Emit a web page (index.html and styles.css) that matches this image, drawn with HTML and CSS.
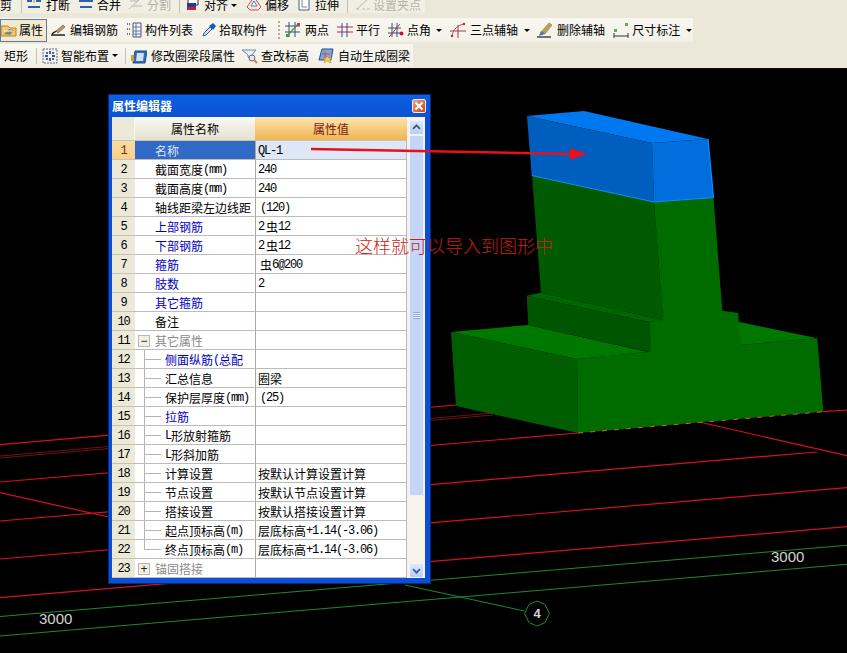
FILE: index.html
```html
<!DOCTYPE html>
<html lang="zh">
<head>
<meta charset="utf-8">
<title>属性编辑器</title>
<link rel="stylesheet" href="styles.css">
</head>
<body>
<div class="app">
<header class="toolbars">
  <div class="bar bar-one">
    <span class="tool mr9">剪</span><i class="sep sep-n"></i>
    <span class="tool"><svg class="ico" viewBox="0 0 16 16"><path d="M1 3h5v2H1zM10 3h5v2h-5zM2 9h12v2H2z" fill="#2f5fa8"/><path d="M8 0v6" stroke="#888"/></svg>打断</span>
    <span class="tool narrow mr7"><svg class="ico" viewBox="0 0 16 16"><path d="M1 3h14v2H1zM2 9h12v2H2z" fill="#2f5fa8"/><path d="M5 0h6v2H5z" fill="#888"/></svg>合并</span>
    <span class="tool narrow off"><svg class="ico" viewBox="0 0 16 16"><path d="M1 12L12 2M2 4h8M5 9h9" stroke="#b8b8b0" fill="none"/></svg>分割</span><i class="sep"></i>
    <span class="tool narrow mr9"><svg class="ico" viewBox="0 0 16 16"><path d="M3 0h10v8H3z" fill="#fff" stroke="#333"/><path d="M2 6h9v6H2z" fill="#1d3f9c"/><path d="M2 10h9v3H2z" fill="#c8203a"/></svg>对齐<b class="arrow snug"></b></span>
    <span class="tool narrow mr7"><svg class="ico" viewBox="0 0 16 16"><path d="M8 0l7 10-3 3H4l-3-3z" fill="#f4e4e4" stroke="#c8505a"/><path d="M8 4l3 5H5z" fill="#fff" stroke="#5a7ab0"/></svg>偏移</span>
    <span class="tool narrow"><svg class="ico" viewBox="0 0 16 16"><path d="M3 0h10v13H3z" fill="#fff" stroke="#47607f"/><path d="M6 3v7h5" stroke="#888" fill="none"/></svg>拉伸</span><i class="sep sep-w"></i>
    <span class="tool tight off end"><svg class="ico" viewBox="0 0 16 16"><path d="M2 12L13 2M1 12h3M7 12h3M12 12h3" stroke="#b8b8b0" fill="none"/></svg>设置夹点</span>
  </div>
  <div class="bar bar-two">
    <span class="tool sel"><svg class="ico" viewBox="0 0 16 16"><path d="M0 4h7l2 2h6v8H0z" fill="#f5c66a" stroke="#b5853a"/><path d="M3 12l5-5 5 1-4 5z" fill="#8a8a6a"/><path d="M3 9h9" stroke="#fff"/></svg>属性</span>
    <span class="tool"><svg class="ico" viewBox="0 0 16 16"><path d="M1 13h14M2 12c2-2 3-2 5-3" stroke="#222" fill="none" stroke-width="1.3"/><path d="M6 9l7-6 2 2-7 6z" fill="#b89a60" stroke="#555" stroke-width=".6"/></svg>编辑钢筋</span>
    <span class="tool narrow"><svg class="ico" viewBox="0 0 16 16"><path d="M1 2h3M1 7h3M1 12h3" stroke="#777" stroke-dasharray="1 1" stroke-width="2"/><path d="M7 1h8v14H7z" fill="#f4f4ff" stroke="#556"/><path d="M7 5h8M7 9h8M7 12h8M10 1v14" stroke="#5b7cb0"/></svg>构件列表</span>
    <span class="tool tight mr11"><svg class="ico" viewBox="0 0 16 16"><path d="M2 14l1-3 6-6 2 2-6 6z" fill="#cfe0f4" stroke="#2a5f9c"/><path d="M8 4l4-3 3 3-3 4z" fill="#1e5aa8"/></svg>拾取构件</span>
    <i class="grip"></i>
    <span class="tool"><svg class="ico" viewBox="0 0 16 16"><path d="M0 4h15M0 10h15M4 0v15M10 0v15" stroke="#33507c"/><path d="M2 14L13 2" stroke="#5b8f2e" stroke-width="1.2"/><rect x="1" y="12" width="3" height="3" fill="#3a9a3a"/><rect x="12" y="1" width="3" height="3" fill="#c9404a"/></svg>两点</span>
    <span class="tool narrow"><svg class="ico" viewBox="0 0 16 16"><path d="M0 5h16M0 10h16" stroke="#c02a3a"/><path d="M5 1v14M10 1v14" stroke="#2a4f9c"/></svg>平行</span>
    <span class="tool narrow"><svg class="ico" viewBox="0 0 16 16"><path d="M0 6h13M0 11h13M4 1v14M9 1v14" stroke="#33507c"/><path d="M1 15L12 2" stroke="#c02a3a"/><circle cx="13.5" cy="11.5" r="2" fill="#d01030"/></svg>点角<b class="arrow"></b></span>
    <span class="tool mr7"><svg class="ico" viewBox="0 0 16 16"><path d="M0 9h16M8 3v13" stroke="#a03a4a"/><path d="M2 14C3 7 8 3 14 2" stroke="#c8404a" fill="none"/><circle cx="14" cy="2" r="1.2" fill="#c02a3a"/><circle cx="2" cy="14" r="1.2" fill="#c02a3a"/></svg>三点辅轴<b class="arrow"></b></span>
    <span class="tool"><svg class="ico" viewBox="0 0 16 16"><path d="M0 15h14" stroke="#444" stroke-width="1.5"/><path d="M4 10l8-9 3 2-7 9z" fill="#c0a050" stroke="#666" stroke-width=".5"/><path d="M2 14l2-5 4 3z" fill="#5a6a9a"/></svg>删除辅轴</span>
    <span class="tool narrow end"><svg class="ico" viewBox="0 0 16 16"><path d="M1 11v5M15 11v5M1 14h14" stroke="#333"/><rect x="1" y="7" width="3" height="3" fill="#6aa66a"/><rect x="12" y="1" width="3" height="3" fill="#6aa66a"/></svg>尺寸标注<b class="arrow wide"></b></span>
  </div>
  <div class="bar bar-three">
    <span class="tool mr8">矩形</span><i class="sep"></i>
    <span class="tool narrow mr7"><svg class="ico" viewBox="0 0 16 16"><path d="M1 1h14v14H1z" fill="#eef0f8" stroke="#667" stroke-dasharray="2 1"/><path d="M8 3v3M8 10v3M3 8h3M10 8h3" stroke="#223" stroke-width="1.4"/><path d="M4 4h2v2H4zM10 4h2v2h-2zM4 10h2v2H4zM10 10h2v2h-2z" fill="#3a6ab0"/></svg>智能布置<b class="arrow snug"></b></span><i class="sep"></i>
    <span class="tool mr7"><svg class="ico" viewBox="0 0 16 16"><path d="M4 3h12l-2 12H2z" fill="#2f6fc0" stroke="#1c4d8e"/><path d="M6 5h7l-1 8H5z" fill="#cfe2f6"/><path d="M0 7h3v6H0z" fill="#e89a30"/></svg>修改圈梁段属性</span>
    <span class="tool narrow mr9"><svg class="ico" viewBox="0 0 16 16"><path d="M0 2h14L9 8v3L6 9V7z" fill="#e8eef8" stroke="#6a88b0"/><circle cx="10" cy="10" r="3" fill="#dde8f4" stroke="#666"/><path d="M12 12l3 3" stroke="#c08a3a" stroke-width="2"/></svg>查改标高</span>
    <span class="tool end"><svg class="ico" viewBox="0 0 16 16"><path d="M4 1h11l-2 11H1z" fill="#7fa8dc" stroke="#1f4f94"/><path d="M7 3v7M4 6h8" stroke="#c8503a"/><path d="M9 8l2 2 3 0-2 2 1 3-4-2-3 2 1-3-2-2h3z" fill="#f2c64c" stroke="#b8862a" stroke-width=".5"/></svg>自动生成圈梁</span>
  </div>
</header>
<main class="scene">
  <svg class="layer" viewBox="0 69 847 584" aria-hidden="true">
    <g class="red">
      <path d="M0 444.7L456 405M0 482L578 433M0 521L817 452M0 559L847 487.7M0 597.6L847 526.7M0 492.7L120 519.5M695 421L847 455.7M823 411.7L847 410"/>
    </g>
    <path class="red-dim" d="M0 456L493 413M0 458L493 415"/>
    <g class="green">
      <path d="M0 616.5L847 545.3M0 636L847 564.3M405 585L524.5 611"/>
      <path d="M537 601l8 3.5 4.500 9-4.500 9-8 3.500-8-3.500-4.500-9 4.500-9z"/>
    </g>
    <text class="num" x="39" y="624">3000</text>
    <text class="num" x="771" y="562">3000</text>
    <text class="num four" x="533.500" y="618">4</text>
    <polygon fill="#007800" points="451,332 528,325 648,352 577,359"/>
    <polygon fill="#007800" points="738,321.700 817.300,338.300 740,345"/>
    <polygon fill="#005e00" points="451,332 577,359 578,433 456,406"/>
    <polygon fill="#006c00" points="577,359 648,352 740,345 817.300,338.300 823.300,411.700 578,433"/>
    <polygon fill="#005a00" points="532,175.500 654,202 663,320 541,292.700"/>
    <polygon fill="#006c00" points="654,202 713.500,197.500 722.300,310.700 738.300,313 740.300,346 648,354 650,322 663,320"/>
    <polygon fill="#006600" points="526.700,295.700 541,292.700 663,320 650,322.300"/>
    <polygon fill="#005600" points="526.700,295.700 650,322.300 651,352.300 528.300,325"/>
    <polygon fill="#0078f0" points="527,116 584,111 708,139 652,143"/>
    <polygon fill="#005fbe" points="527,116 652,143 654,202 531.700,175.500"/>
    <polygon fill="#006edc" points="652,143 708,139 713.500,197.500 654,202"/>
    <path class="edge" d="M531.700 175.500L654 202L713.500 197.500L708 139"/>
    <path class="dash" d="M578 433L823.300 411.700"/>
  </svg>
  <section class="dialog">
    <div class="titlebar"><span class="title">属性编辑器</span><span class="close"></span></div>
    <div class="dialog-body">
      <div class="grid">
        <div class="corner"></div><div class="head">属性名称</div><div class="head head-val">属性值</div>

        <div class="no no-on"><span class="m">1</span></div><div class="name name-on">名称</div><div class="val val-on"><span class="m">QL-1</span></div>
        <div class="no"><span class="m">2</span></div><div class="name">截面宽度<span class="m">(mm)</span></div><div class="val"><span class="m">240</span></div>
        <div class="no"><span class="m">3</span></div><div class="name">截面高度<span class="m">(mm)</span></div><div class="val"><span class="m">240</span></div>
        <div class="no"><span class="m">4</span></div><div class="name">轴线距梁左边线距</div><div class="val"><span class="m in">(120)</span></div>
        <div class="no"><span class="m">5</span></div><div class="name blue">上部钢筋</div><div class="val"><span class="m">2</span><span class="in rb">虫</span><span class="m">12</span></div>
        <div class="no"><span class="m">6</span></div><div class="name blue">下部钢筋</div><div class="val"><span class="m">2</span><span class="in rb">虫</span><span class="m">12</span></div>
        <div class="no"><span class="m">7</span></div><div class="name blue">箍筋</div><div class="val"><span class="in rb">虫</span><span class="m">6@200</span></div>
        <div class="no"><span class="m">8</span></div><div class="name blue">肢数</div><div class="val"><span class="m">2</span></div>
        <div class="no"><span class="m">9</span></div><div class="name blue">其它箍筋</div><div class="val"></div>
        <div class="no"><span class="m">10</span></div><div class="name">备注</div><div class="val"></div>
        <div class="no"><span class="m">11</span></div><div class="name group"><i class="box">−</i>其它属性</div><div class="val"></div>
        <div class="no"><span class="m">12</span></div><div class="name child blue"><i class="branch"></i>侧面纵筋<span class="m">(</span>总配</div><div class="val"></div>
        <div class="no"><span class="m">13</span></div><div class="name child"><i class="branch"></i>汇总信息</div><div class="val">圈梁</div>
        <div class="no"><span class="m">14</span></div><div class="name child"><i class="branch"></i>保护层厚度<span class="m">(mm)</span></div><div class="val"><span class="m in">(25)</span></div>
        <div class="no"><span class="m">15</span></div><div class="name child blue"><i class="branch"></i>拉筋</div><div class="val"></div>
        <div class="no"><span class="m">16</span></div><div class="name child"><i class="branch"></i><span class="m">L</span>形放射箍筋</div><div class="val"></div>
        <div class="no"><span class="m">17</span></div><div class="name child"><i class="branch"></i><span class="m">L</span>形斜加筋</div><div class="val"></div>
        <div class="no"><span class="m">18</span></div><div class="name child"><i class="branch"></i>计算设置</div><div class="val">按默认计算设置计算</div>
        <div class="no"><span class="m">19</span></div><div class="name child"><i class="branch"></i>节点设置</div><div class="val">按默认节点设置计算</div>
        <div class="no"><span class="m">20</span></div><div class="name child"><i class="branch"></i>搭接设置</div><div class="val">按默认搭接设置计算</div>
        <div class="no"><span class="m">21</span></div><div class="name child"><i class="branch"></i>起点顶标高<span class="m">(m)</span></div><div class="val">层底标高<span class="m">+1.14(-3.06)</span></div>
        <div class="no"><span class="m">22</span></div><div class="name child"><i class="branch last"></i>终点顶标高<span class="m">(m)</span></div><div class="val">层底标高<span class="m">+1.14(-3.06)</span></div>
        <div class="no"><span class="m">23</span></div><div class="name group"><i class="box">+</i>锚固搭接</div><div class="val"></div>
      </div>
      <div class="scroll">
        <div class="sbtn"><svg viewBox="0 0 15 15" class="chev"><path d="M3.500 9L7.500 5L11.500 9" /></svg></div>
        <div class="thumb"><i class="thumb-grip"></i></div>
        <div class="track"></div>
        <div class="sbtn"><svg viewBox="0 0 15 15" class="chev"><path d="M3.500 6L7.500 10L11.500 6" /></svg></div>
      </div>
    </div>
  </section>
  <svg class="layer" viewBox="0 69 847 584" aria-hidden="true">
    <path class="arrow-line" d="M311 149L572 154"/>
    <polygon class="arrow-head" points="570,148 587,154 570,160"/>
  </svg>
  <p class="note">这样就可以导入到图形中</p>
</main>
</div>
</body>
</html>
```
FILE: styles.css
```css
* { box-sizing: border-box; }
html, body { margin: 0; padding: 0; background: #000; }
body { width: 847px; height: 653px; overflow: hidden; font: 12px/18px "Noto Sans CJK SC", sans-serif; color: #000; }
.app { width: 847px; height: 653px; display: flex; flex-direction: column; }

.toolbars { height: 69px; flex: none; background: #ebe8d9; border-bottom: 1px solid #111; overflow: hidden; }
.bar { display: flex; align-items: center; width: fit-content; }
.bar-one { height: 13px; align-items: flex-end; background: #f1efe3; padding-right: 4px; }
.bar-two { height: 24px; margin-top: 5px; padding-right: 1px; background: linear-gradient(#f8f7f1, #f3f1e7); }
.bar-three { height: 23px; margin-top: 2px; padding-left: 4px; padding-right: 3px; background: linear-gradient(#f8f7f1, #f1efe4); }

.tool { display: flex; align-items: center; gap: 4px; height: 18px; margin-right: 8px; white-space: nowrap; }
.bar-one .tool { height: 16px; }
.narrow { gap: 3px; }
.tight { gap: 2px; }
.off { color: #b4b2a6; }
.mr7 { margin-right: 7px; }
.mr8 { margin-right: 8px; }
.mr9 { margin-right: 9px; }
.mr11 { margin-right: 11px; }
.end { margin-right: 0; }
.ico { width: 16px; height: 16px; flex: none; }
.sel { width: 47px; height: 23px; margin-right: 3px; gap: 2px; background: #f3ead0; border: 1px solid #5a7ba8; }
.arrow { width: 6px; height: 3px; flex: none; margin-left: 2px; border: 3px solid transparent; border-top-color: #000; border-bottom: 0; }
.snug { margin-left: 0; }
.wide { margin-left: 3px; }
.sep { width: 1px; height: 16px; flex: none; background: #c4c1b0; margin-right: 5px; align-self: center; }
.bar-one .sep { align-self: flex-end; }
.bar-one .sep-n { margin-right: 4px; }
.bar-one .sep-w { margin-right: 7px; }
.grip { width: 2px; height: 18px; flex: none; margin-right: 5px; background: repeating-linear-gradient(#b0ad9c 0 2px, transparent 2px 4px); }

.scene { position: relative; flex: 1; background: #000; overflow: hidden; }
.layer { position: absolute; left: 0; top: 0; width: 847px; height: 584px; display: block; pointer-events: none; }
.red path, .red-dim { fill: none; }
.red path { stroke: #d60f26; stroke-width: 1.2; }
.red-dim { stroke: #701018; stroke-width: 1; }
.green path { fill: none; stroke: #1f8a2c; stroke-width: 1; }
.num { font: 15px "Liberation Sans", sans-serif; fill: #d4d4d4; }
.four { font-size: 13px; font-weight: 700; }
.edge { fill: none; stroke: #0f8cff; stroke-width: 1.2; }
.dash { fill: none; stroke: #d8601a; stroke-width: 1; stroke-dasharray: 5 7; }
.arrow-line { fill: none; stroke: #e8101c; stroke-width: 2.4; }
.arrow-head { fill: #e8101c; }

.note { position: absolute; left: 355px; top: 164px; margin: 0; font-size: 18px; font-weight: 300; line-height: 24px; color: #c81e16; white-space: nowrap; }

.dialog { position: absolute; left: 109px; top: 26px; width: 321px; height: 488px; padding: 0 5px 5px 3px; background: #0a4fd6; box-shadow: 0 0 0 1px #062a80; display: flex; flex-direction: column; }
.titlebar { height: 22px; flex: none; display: flex; align-items: center; justify-content: space-between; background: linear-gradient(#0a5fe4, #0c52d0); margin: 0 -5px 0 -3px; padding: 0 4px 0 3px; }
.title { color: #fff; font-weight: 700; line-height: 18px; }
.close { position: relative; width: 14px; height: 14px; border: 1px solid #f4e8e0; border-radius: 2px; background: linear-gradient(135deg, #f0a080, #d0401c); }
.close::before, .close::after { content: ""; position: absolute; left: 1px; top: 5px; width: 10px; height: 2px; background: #fff; transform: rotate(45deg); }
.close::after { transform: rotate(-45deg); }

.dialog-body { flex: 1; min-height: 0; display: flex; background: #fff; }
.grid { display: grid; width: 295px; flex: none; grid-template-columns: 23px 120px 152px; grid-template-rows: 24px repeat(23, 19px); }
.corner { background: #ece9d8; border-right: 1px solid #f8f7f0; border-bottom: 1px solid #c6c3b2; }
.head { display: flex; align-items: center; justify-content: center; background: linear-gradient(#faf9f3, #e6e2cf); border-bottom: 1px solid #c6c3b2; }
.head-val { background: linear-gradient(#fbe4b0, #f0b552); color: #7a1a10; }
.no, .name, .val { display: flex; align-items: center; padding-top: 2px; line-height: 16px; white-space: nowrap; overflow: hidden; border-bottom: 1px solid #bcbcbc; height: 19px; }
.no { justify-content: center; background: #ece9d8; border-bottom-color: #c6c3b2; }
.no-on { background: linear-gradient(#fbdca2, #f8cf8a); color: #7a2a10; }
.name { padding-left: 20px; background: #fff; }
.val { padding-left: 2px; border-left: 1px solid #aca899; border-right: 1px solid #b8b8b8; background: #fff; }
.name-on { background: #316ac5; color: #dfe6f4; }
.val-on { background: #dde7f5; }
.blue { color: #0000c0; }
.group { padding-left: 3px; color: #8a8a8a; }
.box { display: flex; align-items: center; justify-content: center; width: 12px; height: 12px; margin-right: 5px; border: 1px solid #b8b8b0; background: #f2f0e6; color: #222; font-style: normal; font-family: "Liberation Sans", sans-serif; font-size: 12px; line-height: 10px; }
.child { padding-left: 9px; }
.branch { flex: none; width: 21px; height: 19px; margin-top: -2px; background: linear-gradient(#b4b4b4, #b4b4b4) 0 0 / 1px 100% no-repeat, linear-gradient(#b4b4b4, #b4b4b4) 0 9px / 17px 1px no-repeat; }
.last { background: linear-gradient(#b4b4b4, #b4b4b4) 0 0 / 1px 10px no-repeat, linear-gradient(#b4b4b4, #b4b4b4) 0 9px / 17px 1px no-repeat; }
.m { font-family: "Liberation Mono", monospace; letter-spacing: -1.2px; white-space: pre; }
.in { margin-left: 2px; }

.scroll { flex: 1; display: flex; flex-direction: column; padding: 3px 1px 0 2px; background: #f6f4ea; }
.sbtn { height: 15px; flex: none; background: linear-gradient(#dde7fb, #b8cdf5); border: 1px solid #f2f5fd; border-radius: 2px; }
.chev { display: block; width: 13px; height: 13px; }
.chev path { fill: none; stroke: #3d5a90; stroke-width: 2; }
.thumb { height: 361px; flex: none; display: flex; align-items: center; justify-content: center; background: #c5d5f7; border: 1px solid #eef2fc; border-radius: 2px; }
.thumb-grip { width: 7px; height: 7px; background: repeating-linear-gradient(#8fa8d8 0 1px, #eef2fc 1px 2px); }
.track { flex: 1; background: #f6f4ea; }
```
